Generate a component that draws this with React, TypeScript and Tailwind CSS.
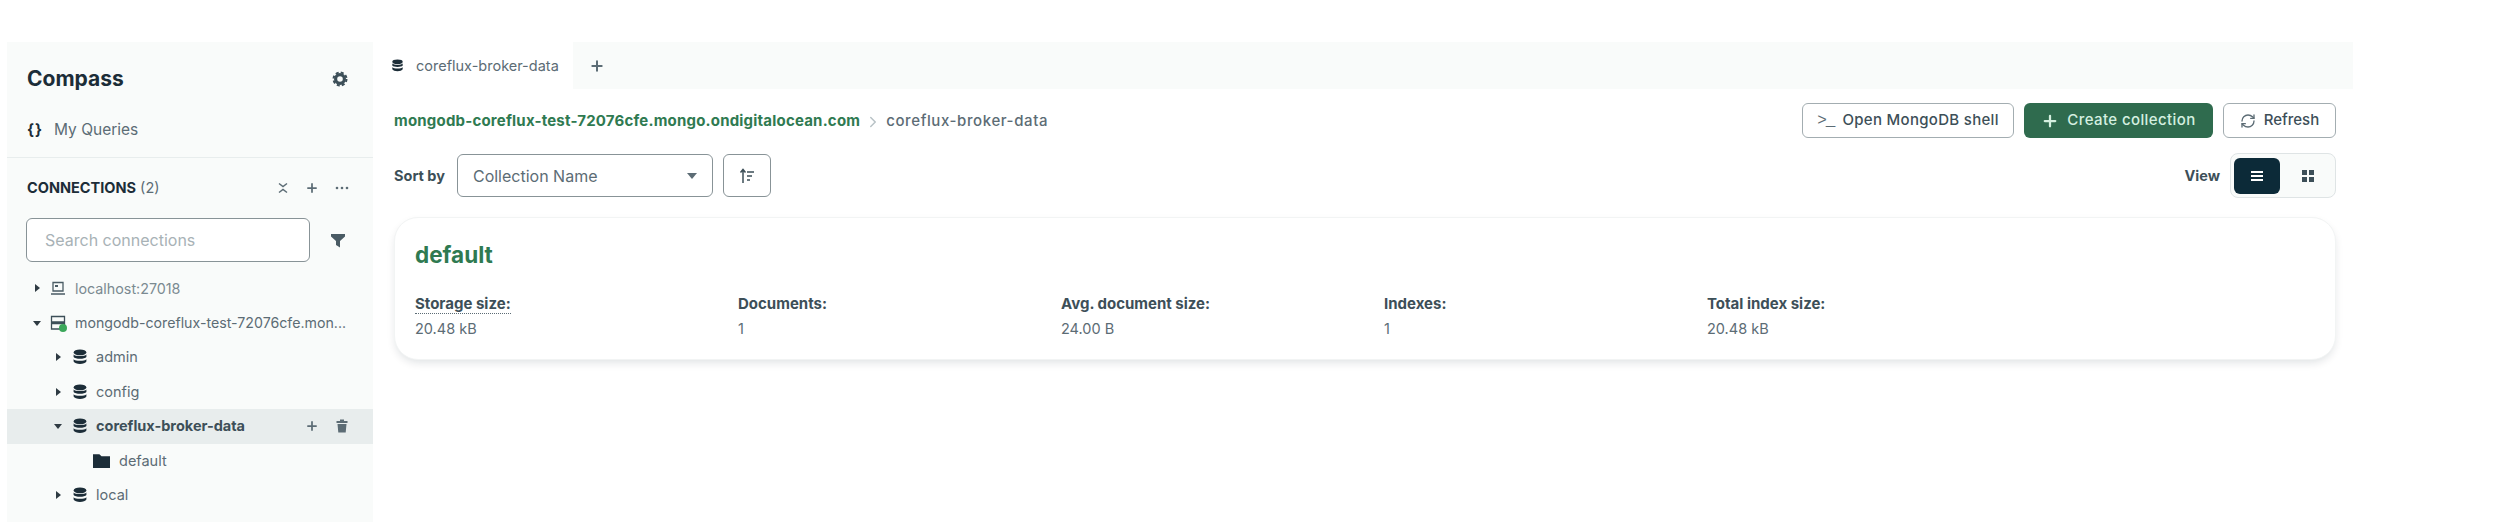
import React from 'react';
import { ChevronRight, Plus, RefreshCw } from 'lucide-react';

const font = "font-['Inter','Noto_Sans',sans-serif]";

const Caret = ({ open }: { open?: boolean }) => (
  <svg width="8" height="8" viewBox="0 0 8 8" className="shrink-0 text-[#2f3b43]">
    {open ? <path d="M0 2h8L4 7z" fill="currentColor" /> : <path d="M2 0v8l5-4z" fill="currentColor" />}
  </svg>
);

const DbIcon = ({ className = 'w-4 h-4' }: { className?: string }) => (
  <svg viewBox="0 0 16 16" className={`${className} shrink-0 text-[#1c2d38]`}>
    <ellipse cx="8" cy="3.4" rx="6.4" ry="2.9" fill="currentColor" />
    <path d="M1.6 5.6C3 7.6 13 7.6 14.4 5.6V8C13 10.4 3 10.4 1.6 8z" fill="currentColor" />
    <path d="M1.6 10.2C3 12.2 13 12.2 14.4 10.2V12.6C13 15.8 3 15.800 1.6 12.6z" fill="currentColor" />
  </svg>
);

const TreeRow = ({ name, open, bold, selected }: { name: string; open?: boolean; bold?: boolean; selected?: boolean }) => (
  <div className={`h-[34.5px] flex items-center pl-[47px] ${selected ? 'bg-[#e8eded]' : ''}`}>
    <Caret open={open} />
    <span className="ml-[10px]"><DbIcon /></span>
    <span className={`ml-[8px] text-[14.5px] ${bold ? 'font-bold text-[#3d4f58]' : 'text-[#5c6c75]'}`}>{name}</span>
    {selected && (
      <div className="ml-auto mr-[23px] flex items-center gap-[15px] text-[#5c6c75]">
        <Plus className="w-[14px] h-[14px]" strokeWidth={3} />
        <svg viewBox="0 0 16 16" className="w-4 h-4" fill="currentColor">
          <path d="M2.500 3h11v2h-11zM6 1.500h4V3H6zM3.500 6h9l-.8 8.500H4.300z" />
        </svg>
      </div>
    )}
  </div>
);

const Stat = ({ label, value, dotted }: { label: string; value: string; dotted?: boolean }) => (
  <div className="w-[323px] shrink-0">
    <div className={`text-[15px] h-[20px] leading-[20px] font-bold text-[#3d4f58] w-fit ${dotted ? 'border-b border-dotted border-[#5c6c75]' : ''}`}>{label}</div>
    <div className="text-[14.5px] leading-[30px] text-[#5c6c75]">{value}</div>
  </div>
);

const Sidebar = () => (
  <aside className="w-[366px] shrink-0 h-[480px] bg-[#f9fbfa] flex flex-col">
    <div className="h-[116px] border-b border-[#e8eded] pl-[20px] pr-[25px] flex flex-col shrink-0">
      <div className="flex items-center justify-between mt-[25px] h-[24px]">
        <span className="text-[21px] font-bold text-[#1c2d38]">Compass</span>
        <svg viewBox="0 0 16 16" className="w-4 h-4 text-[#3d4f58]" fill="none" stroke="currentColor">
          <circle cx="8" cy="8" r="4.400" strokeWidth="3.200" />
          <circle cx="8" cy="8" r="6.500" strokeWidth="2" strokeDasharray="3 2.100" />
        </svg>
      </div>
      <div className="flex items-center mt-[29px] h-[20px]">
        <span className="text-[15px] font-bold text-[#1c2d38] w-[27px] tracking-[1px]">{'{}'}</span>
        <span className="text-[15.5px] text-[#5c6c75]">My Queries</span>
      </div>
    </div>
    <div className="pl-[20px] pr-[24px] mt-[18px] flex items-center justify-between h-[24px]">
      <div className="text-[14.5px] text-[#5c6c75]">
        <span className="font-bold text-[#1c2d38]">CONNECTIONS</span> <span>(2)</span>
      </div>
      <div className="flex items-center gap-[16px] text-[#5c6c75]">
        <svg viewBox="0 0 12 12" className="w-3 h-3" fill="none" stroke="currentColor" strokeWidth="1.500">
          <path d="M2 1.500L6 4.500L10 1.500M2 10.500L6 7.500L10 10.500" />
        </svg>
        <Plus className="w-[14px] h-[14px]" strokeWidth={3} />
        <svg viewBox="0 0 14 4" className="w-[14px] h-1" fill="currentColor">
          <circle cx="2" cy="2" r="1.300" /><circle cx="7" cy="2" r="1.300" /><circle cx="12" cy="2" r="1.300" />
        </svg>
      </div>
    </div>
    <div className="pl-[19px] pr-[27px] mt-[18px] flex items-center justify-between">
      <div className="w-[284px] h-[44px] bg-white border border-[#889397] rounded-[6px] pl-[18px] flex items-center text-[16px] text-[#a8b2b6]">Search connections</div>
      <svg viewBox="0 0 16 16" className="w-4 h-4 text-[#4a5b64]" fill="currentColor">
        <path d="M1 2h14v2.500L10 9v6.500L6 13V9L1 4.500z" />
      </svg>
    </div>
    <div className="mt-[9px]">
      <div className="h-[34.5px] flex items-center pl-[26px]">
        <Caret />
        <svg viewBox="0 0 16 16" className="w-4 h-4 ml-[9px] shrink-0 text-[#4a5b64]" fill="none" stroke="currentColor" strokeWidth="1.300">
          <path d="M3 2.500h10v8.500H3zM1 14h14" />
          <path d="M5 5h3v2H5z" fill="currentColor" stroke="none" />
        </svg>
        <span className="ml-[9px] text-[14.300px] text-[#7b8a91]">localhost:27018</span>
      </div>
      <div className="h-[34.5px] flex items-center pl-[26px]">
        <Caret open />
        <div className="relative ml-[9px] shrink-0">
          <svg viewBox="0 0 16 16" className="w-4 h-4 text-[#3d4f58]" fill="none" stroke="currentColor" strokeWidth="1.300">
            <path d="M1.500 1.500h13v5.500h-13zM1.500 8.500h13v5.500h-13z" />
          </svg>
          <span className="absolute -right-[1px] -bottom-[1px] w-2 h-2 rounded-full bg-[#3ba75a]" />
        </div>
        <span className="ml-[9px] text-[14.200px] text-[#5c6c75] whitespace-nowrap">mongodb-coreflux-test-72076cfe.mon...</span>
      </div>
      <TreeRow name="admin" />
      <TreeRow name="config" />
      <TreeRow name="coreflux-broker-data" open bold selected />
      <div className="h-[34.5px] flex items-center pl-[86px]">
        <svg viewBox="0 0 16 16" className="w-[17px] h-[17px] shrink-0 text-[#1c2d38]" fill="currentColor">
          <path d="M0 2h6l2 2h8v11H0z" />
        </svg>
        <span className="ml-[9px] text-[14.5px] text-[#5c6c75]">default</span>
      </div>
      <TreeRow name="local" />
    </div>
  </aside>
);

const Main = () => (
  <main className="w-[1980px] shrink-0 h-[480px] flex flex-col">
    <div className="h-[47px] flex bg-[#f9fbfa] shrink-0">
      <div className="w-[200px] bg-white flex items-center pl-[18px]">
        <DbIcon className="w-[13px] h-[13px]" />
        <span className="ml-[12px] text-[14.5px] text-[#5c6c75]">coreflux-broker-data</span>
      </div>
      <div className="pl-[16px] flex items-center text-[#5c6c75]">
        <Plus className="w-4 h-4" strokeWidth={3} />
      </div>
    </div>
    <div className="pl-[21px] pr-[17px] flex items-center justify-between mt-[14px] h-[35px]">
      <div className="flex items-center text-[15px] pt-[2px]">
        <span className="font-bold text-[#2f7a51] tracking-[0.2px]">mongodb-coreflux-test-72076cfe.mongo.ondigitalocean.com</span>
        <ChevronRight className="w-[18px] h-[18px] mx-[4px] text-[#b8c2c6]" />
        <span className="font-medium text-[#5c6c75] tracking-[0.6px]">coreflux-broker-data</span>
      </div>
      <div className="flex items-center gap-[10px]">
        <button className="h-[35px] w-[212px] flex items-center justify-center bg-white border border-[#a3adb1] rounded-[6px] text-[15px] tracking-[0.3px] font-medium text-[#3d4f58]">
          <span className="font-['Liberation_Mono',monospace] text-[#5c6c75] text-[16px] mr-[8px] tracking-[-1px]">&gt;_</span>
          Open MongoDB shell
        </button>
        <button className="h-[35px] w-[189px] flex items-center justify-center bg-[#2f6b4e] rounded-[6px] text-[15px] tracking-[0.4px] font-medium text-[#d5f0e0]">
          <Plus className="w-[18px] h-[18px] mr-[8px]" strokeWidth={3} />
          Create collection
        </button>
        <button className="h-[35px] w-[113px] flex items-center justify-center bg-white border border-[#a3adb1] rounded-[6px] text-[15px] font-medium text-[#3d4f58]">
          <RefreshCw className="w-4 h-4 mr-[8px] text-[#5c6c75]" />
          Refresh
        </button>
      </div>
    </div>
    <div className="pl-[21px] pr-[17px] mt-[15px] h-[45px] flex items-center">
      <span className="text-[14.5px] font-bold text-[#3d4f58]">Sort by</span>
      <div className="ml-[12px] w-[256px] h-[43px] bg-white border border-[#889397] rounded-[6px] flex items-center justify-between pl-[15px] pr-[15px] text-[16px] text-[#5c6c75]">
        Collection Name
        <svg width="10" height="6" viewBox="0 0 10 6" className="text-[#5c6c75]"><path d="M0 0h10L5 6z" fill="currentColor" /></svg>
      </div>
      <div className="ml-[10px] w-[48px] h-[43px] bg-white border border-[#889397] rounded-[6px] flex items-center justify-center">
        <svg viewBox="0 0 16 16" className="w-4 h-4 text-[#3d4f58]" fill="none" stroke="currentColor" strokeWidth="1.500">
          <path d="M4 15V2M1.500 4.500L4 1.500l2.500 3M8 4h7M8 8h5M8 12h3" />
        </svg>
      </div>
      <span className="ml-auto text-[14.5px] font-bold text-[#3d4f58]">View</span>
      <div className="ml-[10px] flex items-center h-[45px] w-[106px] bg-[#f9fbfa] border border-[#dfe4e5] rounded-[8px]">
        <div className="w-[46px] h-[36px] ml-[3px] rounded-[6px] bg-[#0c2a38] flex items-center justify-center">
          <svg viewBox="0 0 14 12" className="w-[14px] h-3 text-white" fill="currentColor"><path d="M1 1h12v2H1zM1 5h12v2H1zM1 9h12v2H1z" /></svg>
        </div>
        <div className="flex-1 flex items-center justify-center">
          <svg viewBox="0 0 12 12" className="w-3 h-3 text-[#3d4f58]" fill="currentColor"><path d="M0 0h5v5H0zM7 0h5v5H7zM0 7h5v5H0zM7 7h5v5H7z" /></svg>
        </div>
      </div>
    </div>
    <div className="ml-[21px] mr-[17px] mt-[19px] h-[143px] bg-white rounded-[24px] border border-[#f2f4f4] shadow-[0_4px_10px_-2px_rgba(0,30,43,0.14)] pl-[20px] pt-[23px]">
      <div className="text-[22.5px] leading-[28px] font-bold text-[#2f7a51]">default</div>
      <div className="flex mt-[25px]">
        <Stat label="Storage size:" value="20.48 kB" dotted />
        <Stat label="Documents:" value="1" />
        <Stat label="Avg. document size:" value="24.00 B" />
        <Stat label="Indexes:" value="1" />
        <Stat label="Total index size:" value="20.48 kB" />
      </div>
    </div>
  </main>
);

export default function App() {
  return (
    <div className={`w-[2496px] h-[522px] bg-white overflow-hidden pt-[42px] pl-[7px] flex items-start ${font}`}>
      <Sidebar />
      <Main />
    </div>
  );
}
